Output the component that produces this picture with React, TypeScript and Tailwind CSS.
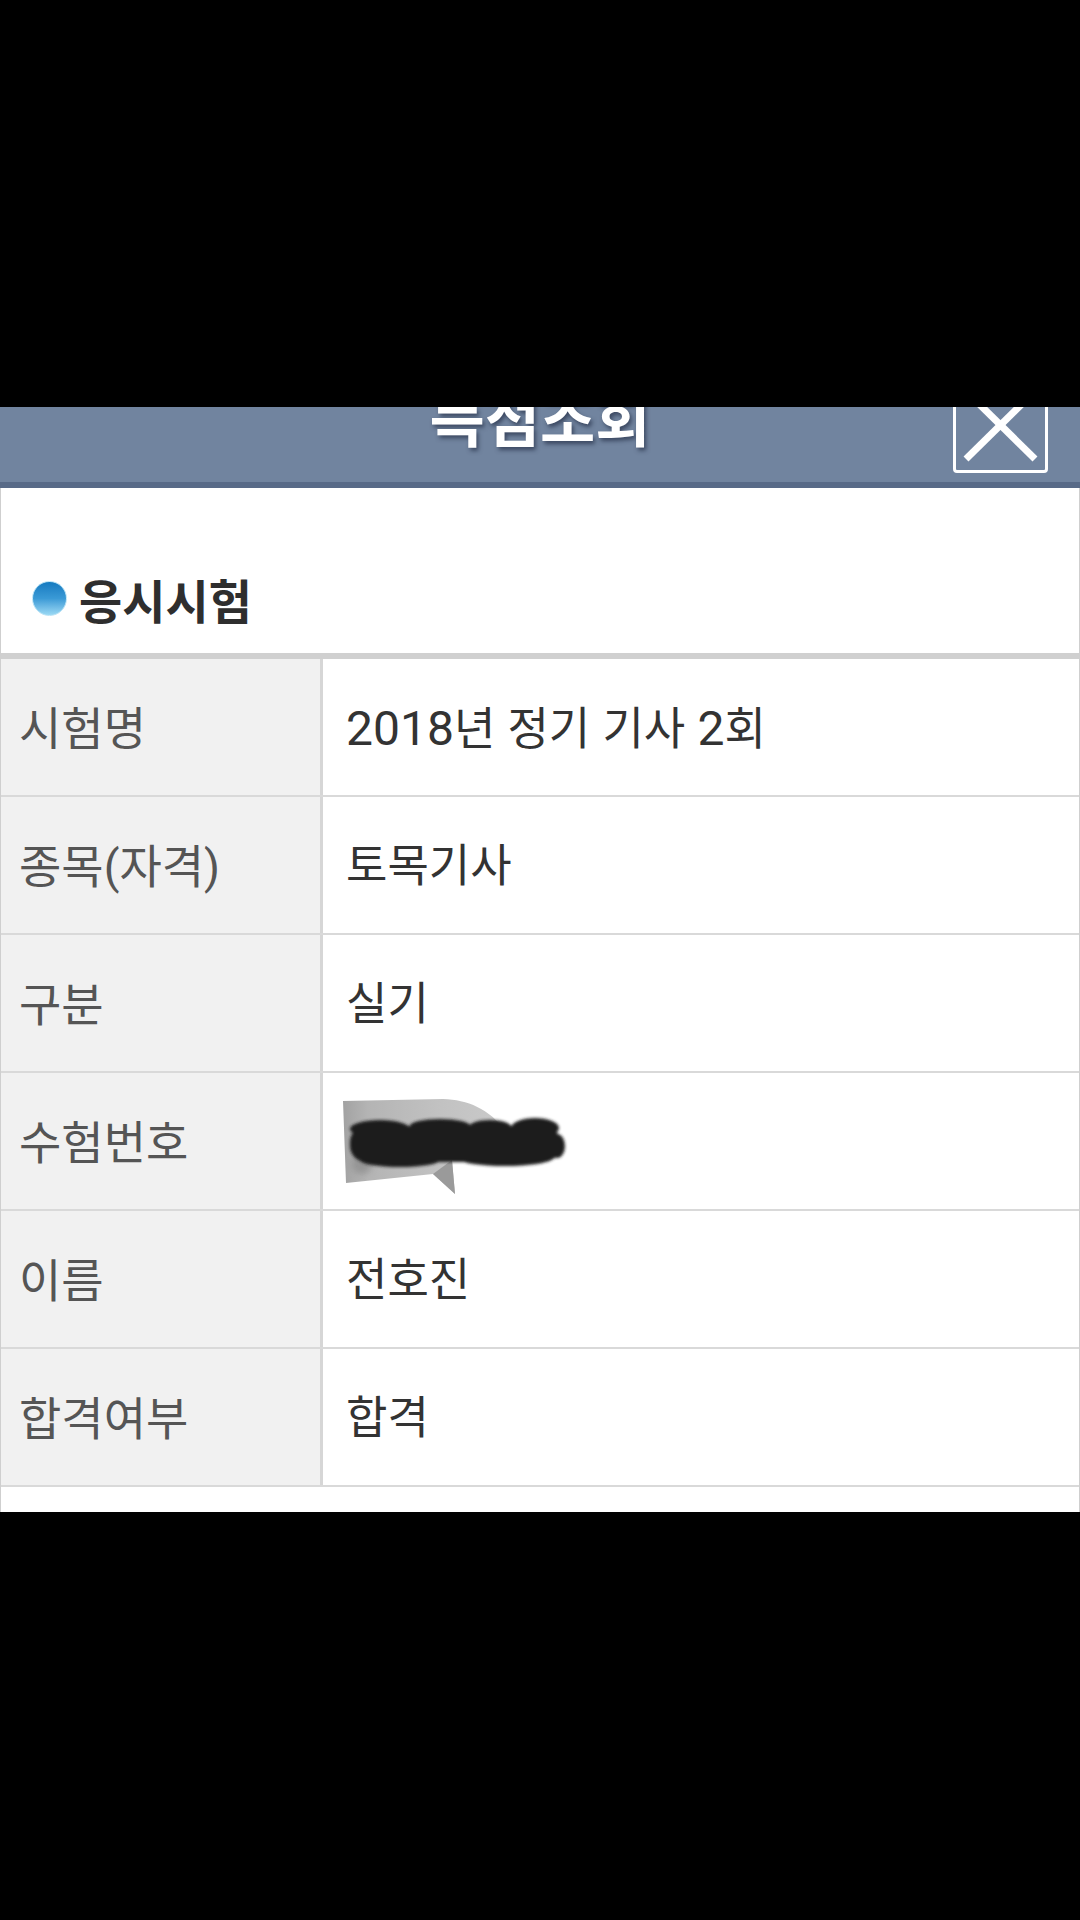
import React from "react";

const rows: { label: string; value: React.ReactNode }[] = [
  {
    label: "시험명",
    value: (
      <span className="[word-spacing:1px]">
        <span className="text-[48px]">2018</span>년 정기 기사 <span className="text-[48px]">2</span>회
      </span>
    ),
  },
  { label: "종목(자격)", value: "토목기사" },
  { label: "구분", value: "실기" },
  { label: "수험번호", value: "__SCRIBBLE__" },
  { label: "이름", value: "전호진" },
  { label: "합격여부", value: "합격" },
];

function Scribble() {
  return (
    <svg width="232" height="110" viewBox="0 0 232 110" className="ml-[-6px] block">
      <defs>
        <linearGradient id="panelg" x1="0" y1="0" x2="1" y2="0">
          <stop offset="0" stopColor="#a2a2a2" />
          <stop offset="0.15" stopColor="#b4b4b4" />
          <stop offset="0.6" stopColor="#c2c2c2" />
          <stop offset="1" stopColor="#cacaca" />
        </linearGradient>
        <filter id="blurA" x="-20%" y="-40%" width="140%" height="180%">
          <feGaussianBlur stdDeviation="1.8" />
        </filter>
        <filter id="blurB" x="-50%" y="-50%" width="200%" height="200%">
          <feGaussianBlur stdDeviation="3" />
        </filter>
      </defs>
      <path
        d="M3 13 L103 11 C128 12 148 20 167 44 L150 74 L112 72 L115 106 L93 86 L6 95 Z"
        fill="url(#panelg)"
      />
      <path d="M93 86 L115 106 L112 72 Z" fill="#9a9a9a" />
      <circle cx="22" cy="76" r="10" fill="#8a8a8a" filter="url(#blurB)" opacity="0.7" />
      <g filter="url(#blurA)" fill="#1c1c1c">
        <rect x="10" y="38" width="210" height="36" rx="16" />
        <ellipse cx="40" cy="41" rx="30" ry="9" />
        <ellipse cx="100" cy="38" rx="30" ry="7" />
        <ellipse cx="150" cy="40" rx="22" ry="8" />
        <ellipse cx="195" cy="40" rx="24" ry="10" />
        <ellipse cx="60" cy="72" rx="40" ry="7" />
        <ellipse cx="165" cy="71" rx="45" ry="7" />
        <ellipse cx="217" cy="58" rx="8" ry="12" />
      </g>
    </svg>
  );
}

export default function App() {
  return (
    <div className="w-[1080px] h-[1920px] bg-black flex flex-col font-['Roboto','Noto_Sans_CJK_KR',sans-serif]">
      <div className="h-[407px] shrink-0" />
      {/* header */}
      <div className="relative h-[75px] shrink-0 bg-[#71849f] overflow-hidden flex justify-center">
        <div className="mt-[-21px] text-[60px] leading-[60px] font-bold text-white [text-shadow:2px_3px_4px_rgba(35,45,70,0.7)] font-['Noto_Sans_CJK_KR',sans-serif]">
          득점조회
        </div>
        <div className="absolute left-[953px] top-[-14px] w-[95px] h-[80px] border-[3px] border-white rounded-[4px]">
          <svg width="89" height="74" viewBox="0 0 89 74" className="block">
            <line x1="15" y1="0" x2="79" y2="63" stroke="white" strokeWidth="7" />
            <line x1="74" y1="0" x2="10" y2="63" stroke="white" strokeWidth="7" />
          </svg>
        </div>
      </div>
      <div className="h-[6px] shrink-0 bg-[#586a87]" />
      {/* panel */}
      <div className="h-[1024px] shrink-0 bg-white border-x border-[#cfcfcf] flex flex-col">
        <div className="mt-[80px] h-[60px] flex items-center">
          <div className="ml-[31px] w-[35px] h-[35px] rounded-full bg-linear-to-b from-[#137ac0] via-[#3a9ad6] to-[#9ad9f4] border border-[#b9e3f6]" />
          <div className="ml-[12px] text-[47px] leading-none font-bold text-[#2e2e2e] font-['Noto_Sans_CJK_KR',sans-serif]">
            응시시험
          </div>
        </div>
        <div className="mt-[25px] border-t-[6px] border-[#d0d0d0]">
          {rows.map((r) => (
            <div key={r.label} className="flex h-[138px] border-b-2 border-[#d9d9d9]">
              <div className="w-[322px] shrink-0 bg-[#f1f1f1] border-r-[3px] border-[#d6d6d6] flex items-center pl-[18px] pt-[3px] text-[46px] leading-none text-[#555555]">
                {r.label}
              </div>
              <div className="flex-1 flex items-center pl-[23px] pt-[3px] text-[45px] leading-none text-[#333333]">
                {r.value === "__SCRIBBLE__" ? <Scribble /> : r.value}
              </div>
            </div>
          ))}
        </div>
      </div>
    </div>
  );
}
